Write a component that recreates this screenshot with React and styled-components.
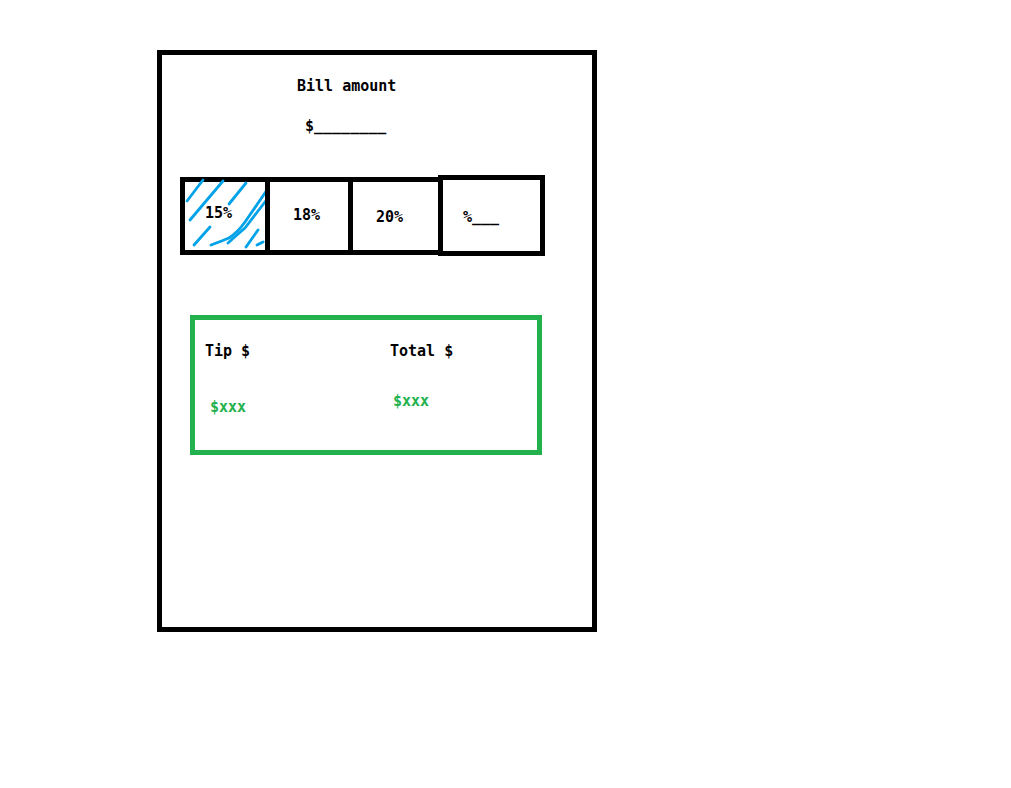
import React from 'react'
import styled, { createGlobalStyle } from 'styled-components'

const GlobalStyle = createGlobalStyle`
  body {
    margin: 0;
    background: #fff;
    font-family: "DejaVu Sans Mono", "Liberation Mono", monospace;
  }
`

const Page = styled.main`
  padding: 50px 0 0 157px;
`

const Frame = styled.section`
  width: 440px;
  height: 582px;
  box-sizing: border-box;
  border: 5px solid #000;
  display: flex;
  flex-direction: column;
  align-items: flex-start;
`

const Text = styled.div`
  font-size: 15px;
  line-height: 15px;
  font-weight: bold;
  color: ${(p) => p.$color || '#000'};
  white-space: pre;
`

const Title = styled(Text)`
  margin: 24px 0 0 135px;
`

const Amount = styled(Text)`
  margin: 25px 0 0 143px;
`

const TipRow = styled.div`
  display: flex;
  align-items: flex-start;
  margin: 41px 0 0 18px;
`

const TipBox = styled.div`
  position: relative;
  box-sizing: border-box;
  width: ${(p) => p.$w}px;
  height: ${(p) => p.$h || 78}px;
  margin-top: ${(p) => p.$top || 0}px;
  border: 5px solid #000;
  display: flex;
  align-items: center;
  padding-left: ${(p) => p.$pad}px;
  & + & {
    margin-left: -5px;
  }
`

const TipLabel = styled(Text)`
  position: relative;
  top: ${(p) => p.$dy || 0}px;
`

const Hatch = styled.svg`
  position: absolute;
  left: -5px;
  top: -5px;
  width: 90px;
  height: 78px;
  pointer-events: none;
`

const ResultBox = styled.div`
  box-sizing: border-box;
  width: 352px;
  height: 140px;
  margin: 59px 0 0 28px;
  border: 5px solid #22b14c;
  display: grid;
  grid-template-columns: 185px 1fr;
  padding: 24px 0 0 10px;
`

const ResultCol = styled.div`
  display: flex;
  flex-direction: column;
  align-items: flex-start;
`

const Value = styled(Text)`
  margin: ${(p) => p.$gap}px 0 0 ${(p) => p.$indent}px;
`

function Hatching() {
  return (
    <Hatch viewBox="0 0 90 78">
      <g stroke="#00a2e8" strokeWidth="2.8" strokeLinecap="round" strokeLinejoin="round" fill="none">
        <path d="M7 24 L23 3" />
        <path d="M10 43 L43 4" />
        <path d="M14 68 L30 50" />
        <path d="M49 27 L66 6" />
        <path d="M31 68 Q42 64 49 61 Q58 55 65 45 L87 13" />
        <path d="M48 66 Q58 57 65 51 L88 21" />
        <path d="M66 70 L78 53" />
        <path d="M77 68 L83 65" />
      </g>
    </Hatch>
  )
}

export default function App() {
  return (
    <>
      <GlobalStyle />
      <Page>
        <Frame>
          <Title>Bill amount</Title>
          <Amount>$________</Amount>
          <TipRow>
            <TipBox $w={90} $top={2} $pad={20}>
              <Hatching />
              <TipLabel $dy={-3}>15%</TipLabel>
            </TipBox>
            <TipBox $w={88} $top={2} $pad={23}>
              <TipLabel $dy={-1}>18%</TipLabel>
            </TipBox>
            <TipBox $w={95} $top={2} $pad={23}>
              <TipLabel $dy={1}>20%</TipLabel>
            </TipBox>
            <TipBox $w={107} $h={81} $pad={20}>
              <TipLabel $dy={2}>%___</TipLabel>
            </TipBox>
          </TipRow>
          <ResultBox>
            <ResultCol>
              <Text>Tip $</Text>
              <Value $color="#22b14c" $gap={41} $indent={5}>$xxx</Value>
            </ResultCol>
            <ResultCol>
              <Text>Total $</Text>
              <Value $color="#22b14c" $gap={35} $indent={3}>$xxx</Value>
            </ResultCol>
          </ResultBox>
        </Frame>
      </Page>
    </>
  )
}
